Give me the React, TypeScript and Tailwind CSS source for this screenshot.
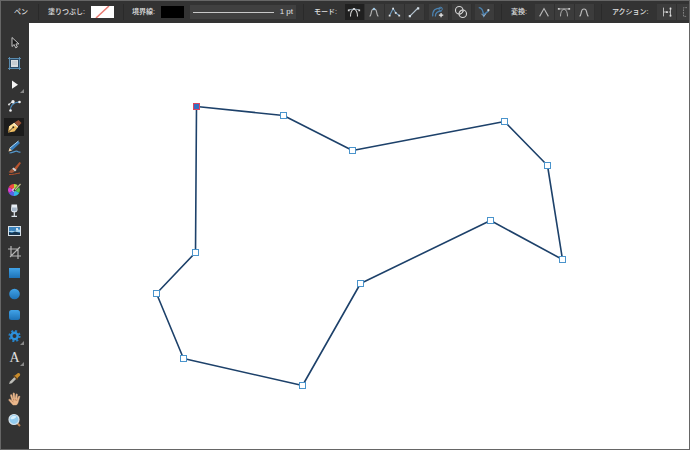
import clsx from 'clsx';
import type { ReactNode } from 'react';

const anchors = [
  [167, 83],
  [254, 92],
  [323, 127],
  [475, 98],
  [518, 142],
  [533, 236],
  [461, 197],
  [331, 260],
  [273, 362],
  [154, 335],
  [127, 270],
  [166, 229],
];

type Icon = { name: string; art: ReactNode; more?: boolean };

const tools: Icon[] = [
  {
    name: '移動ツール',
    art: <path d="M5 2.5v9l2.2-2 1.500 3.300 1.600-.8-1.400-3.100h3z" fill="#181818" stroke="#d5d5d5" strokeWidth=".9" />,
  },
  {
    name: 'アートボードツール',
    art: (
      <>
        <rect x="2.5" y="2.5" width="10" height="10" fill="#2b4963" />
        <path d="M2.5 1v13M12.5 1v13M1 2.5h13M1 12.5h13" stroke="#5f93b9" strokeWidth=".9" />
        <rect x="4" y="4" width="7" height="7" fill="#d9dde0" />
        <path d="M5 6h5M5 8h5" stroke="#a9b4bd" strokeWidth=".8" />
      </>
    ),
  },
  { name: 'ノードツール', art: <path d="M5 3.5v8.3l6-4z" fill="#f4f4f4" />, more: true },
  {
    name: 'コーナーツール',
    art: (
      <>
        <path d="M3.500 13c-.5-5 2-8.500 9-9" fill="none" stroke="#4c8cc0" strokeWidth="1.200" />
        <path d="M1.500 6.500L6 3.500" stroke="#c8d4dc" />
        <circle cx="3.5" cy="12.5" r="1.300" fill="#eee" />
        <circle cx="2" cy="6.5" r="1" fill="#ddd" />
        <circle cx="6" cy="3.8" r="1.700" fill="#eee" />
        <circle cx="12.5" cy="4" r="1.300" fill="#eee" />
      </>
    ),
  },
  {
    name: 'ペンツール',
    art: (
      <>
        <path d="M1 13.5l1-6L7 4l4 4-3.500 4.500z" fill="#efbd62" />
        <path d="M2 7.5L7 4l2 2-6 6z" fill="#ffe09a" />
        <path d="M7.5 3.5l3.800 3.800L14.500 4 11.500 1z" fill="#9a5134" />
        <path d="M6.8 4.2l4 3.800" stroke="#f4e7c8" strokeWidth="1.200" />
        <path d="M1.5 13L6 8.500" stroke="#322416" strokeWidth=".9" />
        <circle cx="6.3" cy="8.3" r="1" fill="#322416" />
      </>
    ),
  },
  {
    name: '鉛筆ツール',
    art: (
      <>
        <path d="M2.5 8L11 1l2 2-8 7.500z" fill="#397fbd" />
        <path d="M3 8l8.500-7" stroke="#a9d2f0" />
        <path d="M1.5 11.500l1-3.500 2.500 2.500z" fill="#ecd2ae" />
        <path d="M2.500 13c3.500 0 5-2 7-1.800s1.500 1.600 4 .8" fill="none" stroke="#5496ca" strokeWidth="1.200" />
      </>
    ),
  },
  {
    name: 'ベクトルブラシツール',
    art: (
      <>
        <path d="M6.500 8L12.500 1l1.500 1-5.500 8z" fill="#b9552f" />
        <path d="M5 8l3 2.500L9.500 9l-3-2.500z" fill="#d4d4d4" />
        <path d="M1.500 11c1.500 0 1.500-3 4-3l2 2.300c-1.500 2-3.500 2.200-6 .7z" fill="#a3583a" />
        <path d="M2 13.500c4 .3 7-1 11-1.500" fill="none" stroke="#b4512c" />
      </>
    ),
  },
  {
    name: '塗りつぶしツール',
    art: (
      <>
        <path d="M7 8V2a6 6 0 0 1 5.200 3z" fill="#b9dc43" />
        <path d="M7 8l5.200-3a6 6 0 0 1 0 6z" fill="#55c84a" />
        <path d="M7 8l5.200 3A6 6 0 0 1 7 14z" fill="#32b9e7" />
        <path d="M7 8v6a6 6 0 0 1-5.200-3z" fill="#5864e8" />
        <path d="M7 8l-5.200 3a6 6 0 0 1 0-6z" fill="#dc3dcf" />
        <path d="M7 8L1.800 5A6 6 0 0 1 7 2z" fill="#ef4b42" />
        <circle cx="7" cy="8" r="1.800" fill="#e9dff2" />
        <path d="M7 9l5.500-6" stroke="#333" strokeWidth="2.200" />
        <path d="M8 8l5.500-6" stroke="#c5bc8f" strokeWidth="1.200" />
      </>
    ),
  },
  {
    name: '透明度ツール',
    art: (
      <>
        <path d="M4.500 1.500h5.500l.5 5c0 2-1 2.800-3.200 2.800S4 8.500 4 6.500z" fill="#e7edf3" />
        <path d="M5 4.500h4.700l.2 2c0 1.300-.7 1.800-2.600 1.800S4.700 7.800 4.700 6.500z" fill="#a6b6c7" />
        <path d="M7.300 9v4M4.500 13.300h5.500" stroke="#dde4ea" strokeWidth="1.200" />
      </>
    ),
  },
  {
    name: '画像配置ツール',
    art: (
      <>
        <rect x="1.5" y="2.5" width="12" height="9" fill="#3c84bd" stroke="#d9e1e8" />
        <path d="M2 7.500c3-2 5 1 7-1s3 0 4-1v2.500H2z" fill="#a8d3ed" />
        <path d="M2 11V8l3 1 3-1.500L13 9v2z" fill="#173650" />
        <circle cx="10" cy="5" r="1" fill="#fff" />
      </>
    ),
  },
  {
    name: 'ベクトル切り抜きツール',
    art: <path d="M4 1v10h10M1 4h10v10M3 12L13 2" fill="none" stroke="#b5b5b5" strokeWidth="1.200" />,
  },
  { name: '長方形ツール', art: <rect x="2" y="2" width="11" height="10" fill="url(#blue)" /> },
  { name: '楕円ツール', art: <circle cx="7.5" cy="7" r="5.300" fill="url(#blue)" /> },
  { name: '角丸長方形ツール', art: <rect x="2" y="2" width="11" height="10" rx="2.500" fill="url(#blue)" /> },
  {
    name: '歯車ツール',
    art: (
      <>
        <circle cx="7.5" cy="7" r="5" fill="none" stroke="#2582c9" strokeWidth="2.200" strokeDasharray="2 1.927" />
        <circle cx="7.5" cy="7" r="3.200" fill="none" stroke="#2d91db" strokeWidth="2.400" />
      </>
    ),
    more: true,
  },
  {
    name: 'アーティスティックテキストツール',
    art: (
      <text x="7.5" y="12" textAnchor="middle" fontSize="14" fill="#e0e0e0" className="font-['Liberation_Serif',serif]">
        A
      </text>
    ),
    more: true,
  },
  {
    name: 'カラーピッカーツール',
    art: (
      <>
        <path d="M2 13l1-2.500 5-5 1.800 1.800-5 5z" fill="#bdbdb8" />
        <path d="M7 5l3 3 1-1.500 2-2c.8-1.500-1-3-2.300-2.200L8.500 4z" fill="#c98c2c" />
        <path d="M6.500 4.500l4 4" stroke="#6d471b" strokeWidth="1.200" />
      </>
    ),
  },
  {
    name: '表示ツール',
    art: (
      <>
        <path
          d="M6 13L2 8.500c-.8-1 .3-1.800 1.200-1L5 9 3.500 3.500c-.2-1.200 1.200-1.400 1.500-.3l1.200 4-.2-5.500c0-1.200 1.500-1.200 1.600 0l.4 5.300L9 2.500c.2-1.100 1.500-.9 1.400.2L10 7.500l1.500-3c.6-1 1.700-.4 1.300.6L11.500 9c-.3 2-1 3-2 4z"
          fill="#eab78b"
          stroke="#eab78b"
          strokeWidth=".4"
        />
        <path d="M5 9l1.500 1M6.500 7l.2 1.500M8.300 7v1.500M10 7.500L9.500 9" stroke="#a76b48" strokeWidth=".6" />
      </>
    ),
  },
  {
    name: 'ズームツール',
    art: (
      <>
        <path d="M10 10l3 3" stroke="#b98254" strokeWidth="2" />
        <circle cx="7" cy="6.5" r="5" fill="#92cbee" stroke="#d8e4eb" strokeWidth="1.200" />
        <path d="M3.500 6C4 3 7 2 9.500 3.500 8 6 6 6.500 3.500 6z" fill="#d8effc" />
      </>
    ),
  },
];

const modes: Icon[] = [
  {
    name: 'ペンモード',
    art: (
      <>
        <path d="M4 13c0-4 1-7.500 4-8.500 3 1 4 4.500 4 8.500" fill="none" stroke="#ddd" strokeWidth="1.200" />
        <path d="M2 5.500l6-1 6 1" fill="none" stroke="#9fb5c6" strokeWidth=".9" />
        <path d="M1 5h2v2H1zM7 3.500h2v2H7zM13 5h2v2h-2z" fill="#ddd" />
      </>
    ),
  },
  {
    name: 'スマートモード',
    art: (
      <>
        <path d="M3 13c1.500-1 1.500-2.500 2-5 .8-4.500 5.200-4.500 6 0 .5 2.500.5 4 2 5" fill="none" stroke="#b5b5b5" strokeWidth="1.300" />
        <circle cx="8" cy="4.5" r="1.400" fill="#9cc4e0" />
      </>
    ),
  },
  {
    name: '多角形モード',
    art: (
      <>
        <path d="M3 12l4-8 3 5 4 3" fill="none" stroke="#6d9cc2" strokeWidth="1.200" />
        <path d="M2 11h2v2H2zM6 3h2v2H6zM9 8h2v2H9zM13 11h2v2h-2z" fill="#e2e2e2" />
      </>
    ),
  },
  {
    name: '直線モード',
    art: (
      <>
        <path d="M3 13l9-9" stroke="#b4c3cf" strokeWidth="1.300" />
        <path d="M2 11.500h2.500V14H2zM11.500 2.500H14V5h-2.500z" fill="#d5e0e8" />
      </>
    ),
  },
];

const options: Icon[] = [
  {
    name: '選択範囲に新規曲線を追加',
    art: (
      <>
        <path d="M2 13C1.500 6 5 3 12 3.500M5 13c0-4 2-6 7-6" fill="none" stroke="#4b83b2" strokeWidth="1.400" />
        <circle cx="11" cy="4.5" r="2" fill="none" stroke="#4b83b2" />
        <path d="M9 11.500h5M11.500 9v5" stroke="#eee" strokeWidth="1.400" />
      </>
    ),
  },
  {
    name: '塗りつぶしを使用',
    art: (
      <g fill="none" stroke="#d7d7d7" strokeWidth="1.300">
        <circle cx="6" cy="6" r="4.300" />
        <circle cx="10" cy="10" r="4.300" />
        <path d="M6 9l3-3M7 11l4-4" strokeWidth=".9" />
      </g>
    ),
  },
  {
    name: 'ラバーバンドモード',
    art: (
      <>
        <path d="M2 3c4 0 5 3 5.500 9 1-2 3-3 5.500-5" fill="none" stroke="#4b83b2" strokeWidth="1.500" />
        <path d="M5 10l3 3 2-3" fill="none" stroke="#a8bdd0" />
        <circle cx="13" cy="6" r="1.300" fill="#ccd6de" />
      </>
    ),
  },
];

const conversions: Icon[] = [
  { name: 'シャープに変換', art: <path d="M3 13l5-9 5 9" fill="none" stroke="#bbb" strokeWidth="1.200" /> },
  {
    name: 'スムーズに変換',
    art: (
      <>
        <path d="M4 13c0-4 1-7.500 4-8.500 3 1 4 4.500 4 8.500M2 4.500h12" fill="none" stroke="#bbb" />
        <path d="M1 3.500h2v2H1zM13 3.500h2v2h-2z" fill="#ccc" />
      </>
    ),
  },
  {
    name: 'スマートに変換',
    art: <path d="M3 13c1.500-1 1.500-3 2-5 .8-4.500 5.200-4.500 6 0 .5 2 .5 4 2 5" fill="none" stroke="#bbb" strokeWidth="1.300" />,
  },
];

const actions: Icon[] = [
  {
    name: '曲線を分割',
    art: (
      <>
        <path d="M4 3v10M4 8h4M12 3v10M12 8h-2" stroke="#ccc" />
        <path d="M7 7h2v2H7zM11 3h2v2h-2zM11 11h2v2h-2z" fill="#ddd" />
      </>
    ),
  },
  { name: '曲線を閉じる', art: <path d="M8 3H4v10h4M11 4h4M11 12h4" fill="none" stroke="#888" strokeDasharray="2 1" /> },
];

function IconButtons({ items, active, gap }: { items: Icon[]; active?: number; gap?: boolean }) {
  return (
    <div className={clsx('flex shrink-0', gap && 'gap-[3px]')}>
      {items.map((item, i) => (
        <button
          key={item.name}
          aria-label={item.name}
          aria-pressed={i === active}
          className={clsx(
            'flex h-4 w-5 shrink-0 items-center justify-center border-r border-[#303030]',
            i === active ? 'bg-[#202020]' : 'bg-[#3c3c3c]',
          )}
        >
          <svg viewBox="0 0 16 16" className="size-[14px]">
            {item.art}
          </svg>
        </button>
      ))}
    </div>
  );
}

function Divider() {
  return <div className="h-4 w-px shrink-0 bg-[#2a2a2a]" />;
}

function ContextBar() {
  return (
    <header className="flex h-[22px] shrink-0 items-center overflow-hidden bg-[#333] pl-[13px] text-[7px] font-medium whitespace-nowrap text-[#e0e0e0]">
      <span>ペン</span>
      <div className="ml-[10px] flex shrink-0 items-center">
        <Divider />
        <label htmlFor="fill" className="ml-[9px]">塗りつぶし:</label>
        <button id="fill" aria-label="塗りつぶし" className="ml-[6px] h-3 w-[23px] bg-white">
          <svg viewBox="0 0 23 12" className="h-3 w-[23px]">
            <path d="M5 12L18 0" stroke="#e87a72" strokeWidth="1.500" />
          </svg>
        </button>
      </div>
      <div className="ml-[9px] flex shrink-0 items-center">
        <Divider />
        <label htmlFor="stroke" className="ml-2">境界線:</label>
        <button id="stroke" aria-label="境界線" className="ml-[6px] h-3 w-[23px] bg-black" />
        <button aria-label="境界線の幅" className="ml-[6px] flex h-[14px] w-[106px] items-center gap-[6px] bg-[#404040] px-[3px] text-[8px]">
          <span className="h-px flex-1 bg-[#c8c8c8]" />
          <span>1 pt</span>
        </button>
      </div>
      <div className="ml-[7px] flex shrink-0 items-center">
        <Divider />
        <span className="mr-2 ml-[10px]">モード:</span>
        <IconButtons items={modes} active={0} />
        <div className="ml-1">
          <IconButtons items={options} gap />
        </div>
      </div>
      <div className="ml-[6px] flex shrink-0 items-center">
        <Divider />
        <span className="mr-2 ml-[9px]">変換:</span>
        <IconButtons items={conversions} />
      </div>
      <div className="ml-[6px] flex shrink-0 items-center">
        <Divider />
        <span className="mr-[9px] ml-[10px]">アクション:</span>
        <IconButtons items={actions} />
      </div>
    </header>
  );
}

function ToolPanel() {
  return (
    <nav aria-label="ツール" className="flex w-7 shrink-0 flex-col bg-[#333] pt-[9px] pr-[2px]">
      {tools.map((tool) => (
        <button
          key={tool.name}
          aria-label={tool.name}
          className="relative flex h-[21px] shrink-0 items-center justify-center"
        >
          <span className={clsx('flex h-[18px] w-5 items-center justify-center', tool.name === 'ペンツール' && 'bg-[#1c1c1c]')}>
            <svg viewBox="0 0 15 15" className="size-[15px]">
              {tool.art}
            </svg>
          </span>
          {tool.more && (
            <svg viewBox="0 0 4 4" className="absolute right-[3px] bottom-[2px] size-1">
              <path d="M4 0v4H0z" fill="#888" />
            </svg>
          )}
        </button>
      ))}
    </nav>
  );
}

function Canvas() {
  return (
    <main className="min-w-0 flex-1 bg-white">
      <svg className="block size-full" role="img" aria-label="ペンで描いたパス">
        <g transform="translate(.5 .5)">
          <polygon
            points={anchors.map((p) => p.join(',')).join(' ')}
            fill="none"
            stroke="#1d416a"
            strokeWidth="1.600"
            strokeLinejoin="round"
          />
          {anchors.map(([x, y], i) => (
            <rect
              key={i}
              x={x - 3}
              y={y - 3}
              width="6"
              height="6"
              fill={i === 0 ? '#356fc2' : '#fff'}
              stroke={i === 0 ? '#dc4560' : '#4a94cc'}
            />
          ))}
        </g>
      </svg>
    </main>
  );
}

export default function App() {
  return (
    <div className="flex h-screen flex-col overflow-hidden border border-[#666] bg-[#333] font-['Liberation_Sans','Noto_Sans_CJK_JP',sans-serif]">
      <svg className="absolute size-0" aria-hidden="true">
        <defs>
          <linearGradient id="blue" x1="0" y1="0" x2="0" y2="1">
            <stop offset="0" stopColor="#41a3e8" />
            <stop offset="1" stopColor="#1d72b7" />
          </linearGradient>
        </defs>
      </svg>
      <ContextBar />
      <div className="flex min-h-0 flex-1">
        <ToolPanel />
        <Canvas />
      </div>
    </div>
  );
}
